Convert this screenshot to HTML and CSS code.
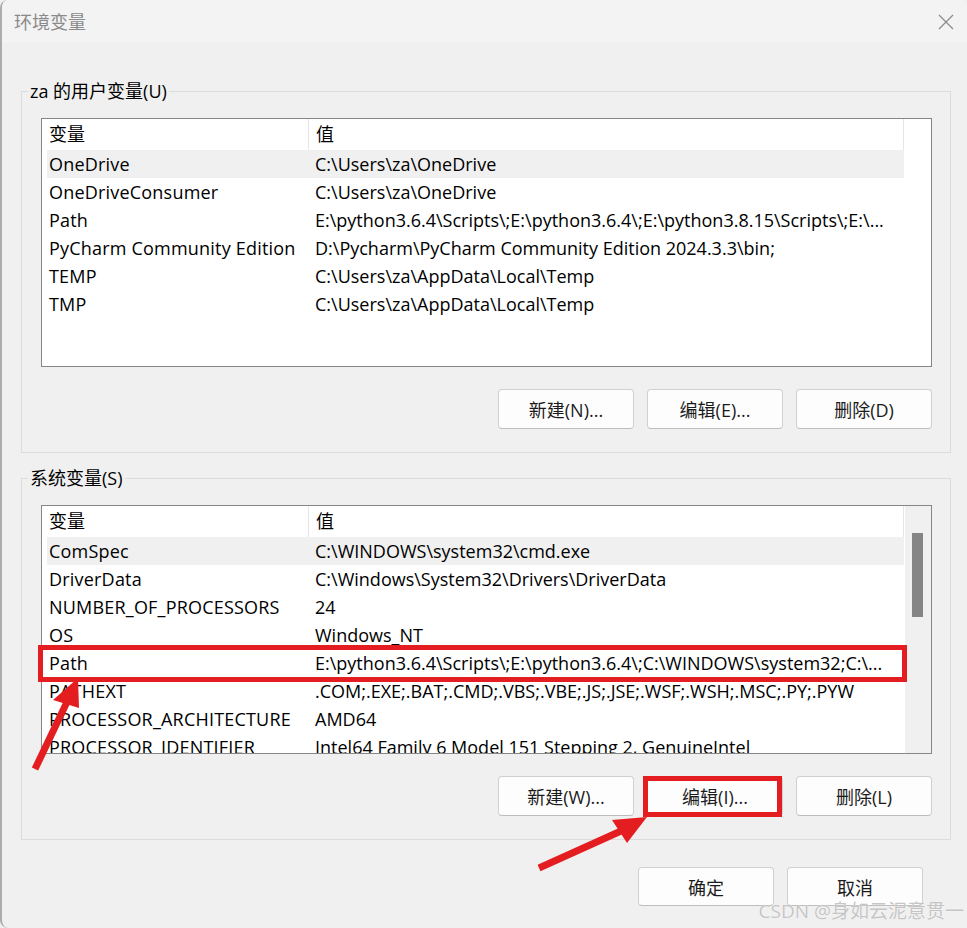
FILE: index.html
```html
<!DOCTYPE html>
<html lang="zh-CN">
<head>
<meta charset="utf-8">
<title>环境变量</title>
<link rel="stylesheet" href="styles.css">
</head>
<body>
<div class="window">
  <header class="titlebar">
    <span class="title">环境变量</span>
    <svg class="close" width="16" height="16" viewBox="0 0 16 16"><path d="M1 1 L15 15 M15 1 L1 15" stroke="#8a8a8a" stroke-width="1.2" fill="none"/></svg>
  </header>
  <main class="content">
    <fieldset class="group">
      <legend>za 的用户变量(U)</legend>
      <div class="group-body">
        <div class="list">
          <div class="cols">
            <div class="head"><div class="hc name">变量</div><div class="hc value">值</div></div>
            <div class="row sel"><div class="c name">OneDrive</div><div class="c value">C:\Users\za\OneDrive</div></div>
            <div class="row"><div class="c name">OneDriveConsumer</div><div class="c value">C:\Users\za\OneDrive</div></div>
            <div class="row"><div class="c name">Path</div><div class="c value">E:\python3.6.4\Scripts\;E:\python3.6.4\;E:\python3.8.15\Scripts\;E:\...</div></div>
            <div class="row"><div class="c name">PyCharm Community Edition</div><div class="c value">D:\Pycharm\PyCharm Community Edition 2024.3.3\bin;</div></div>
            <div class="row"><div class="c name">TEMP</div><div class="c value">C:\Users\za\AppData\Local\Temp</div></div>
            <div class="row"><div class="c name">TMP</div><div class="c value">C:\Users\za\AppData\Local\Temp</div></div>
          </div>
          <div class="side"></div>
        </div>
        <div class="btns">
          <button class="btn">新建(N)...</button>
          <button class="btn">编辑(E)...</button>
          <button class="btn">删除(D)</button>
        </div>
      </div>
    </fieldset>

    <fieldset class="group sys">
      <legend>系统变量(S)</legend>
      <div class="group-body">
        <div class="list">
          <div class="cols">
            <div class="head"><div class="hc name">变量</div><div class="hc value">值</div></div>
            <div class="row sel"><div class="c name">ComSpec</div><div class="c value">C:\WINDOWS\system32\cmd.exe</div></div>
            <div class="row"><div class="c name">DriverData</div><div class="c value">C:\Windows\System32\Drivers\DriverData</div></div>
            <div class="row"><div class="c name">NUMBER_OF_PROCESSORS</div><div class="c value">24</div></div>
            <div class="row"><div class="c name">OS</div><div class="c value">Windows_NT</div></div>
            <div class="row"><div class="c name">Path</div><div class="c value">E:\python3.6.4\Scripts\;E:\python3.6.4\;C:\WINDOWS\system32;C:\...</div></div>
            <div class="row"><div class="c name">PATHEXT</div><div class="c value">.COM;.EXE;.BAT;.CMD;.VBS;.VBE;.JS;.JSE;.WSF;.WSH;.MSC;.PY;.PYW</div></div>
            <div class="row"><div class="c name">PROCESSOR_ARCHITECTURE</div><div class="c value">AMD64</div></div>
            <div class="row"><div class="c name">PROCESSOR_IDENTIFIER</div><div class="c value">Intel64 Family 6 Model 151 Stepping 2, GenuineIntel</div></div>
          </div>
          <div class="side scroll"><div class="thumb"></div></div>
        </div>
        <div class="btns">
          <button class="btn">新建(W)...</button>
          <button class="btn">编辑(I)...</button>
          <button class="btn">删除(L)</button>
        </div>
      </div>
    </fieldset>

    <div class="footer">
      <button class="btn foot">确定</button>
      <button class="btn foot">取消</button>
    </div>
  </main>

  <svg class="annot" width="967" height="928" viewBox="0 0 967 928">
    <rect x="40.5" y="647.5" width="864" height="32" fill="none" stroke="#e41e20" stroke-width="5"/>
    <rect x="645.5" y="778.5" width="134" height="36" fill="none" stroke="#e41e20" stroke-width="5"/>
    <line x1="35" y1="769" x2="67" y2="702" stroke="#e41e20" stroke-width="7"/>
    <polygon points="53,700 79,708 78,678" fill="#e41e20"/>
    <line x1="539" y1="868" x2="621" y2="831" stroke="#e41e20" stroke-width="7"/>
    <polygon points="612,820 627,843 647,817" fill="#e41e20"/>
  </svg>
  <div class="watermark">CSDN @身如云泥意贯一</div>
</div>
</body>
</html>
```
FILE: styles.css
```css
* { box-sizing: border-box; }
html, body { margin: 0; padding: 0; background: #f0f0f0; }
body {
  font-family: "Open Sans", "Noto Sans CJK SC", sans-serif;
  font-size: 18px;
  color: #000;
}
.window {
  position: relative;
  width: 967px;
  height: 928px;
  background: #f0f0f0;
  border-left: 2px solid #acacac;
  border-radius: 8px 8px 0 8px;
  overflow: hidden;
}
.titlebar {
  height: 43px;
  background: #f3f3f3;
  display: flex;
  align-items: center;
  justify-content: space-between;
  padding: 0 13px 0 12px;
}
.title { color: #8a8a8a; font-size: 18px; line-height: 20px; }
.close { display: block; }

.content { padding: 38px 16px 0 19px; }

.group {
  margin: 0;
  padding: 0;
  border: 1px solid #dcdcdc;
  min-width: 0;
}
.group.sys { margin-top: 15px; }
.group legend {
  margin-left: 6px;
  padding: 0 2px;
  height: 20px;
  line-height: 20px;
  font-size: 18px;
}
.group-body { padding: 17px 18px 23px 19px; }

.list {
  height: 249px;
  border: 1px solid #868686;
  background: #fff;
  display: flex;
  overflow: hidden;
}
.cols { width: 862px; flex: none; }
.side { width: 27px; flex: none; }
.side.scroll { background: #f0f0f0; border-left: 1px solid #fff; }
.thumb { width: 11px; height: 84px; margin: 27px 0 0 7px; background: #858585; }

.head { display: flex; height: 31px; }
.hc { line-height: 31px; padding-left: 7px; border-right: 1px solid #e5e5e5; }
.hc.name { width: 267px; }
.hc.value { width: 595px; }

.row {
  display: flex;
  height: 28px;
  margin-left: 5px;
  width: 857px;
  line-height: 28px;
  white-space: nowrap;
}
.row.sel { background: #f0f0f0; }
.c { overflow: hidden; }
.c.name { width: 261px; padding-left: 2px; letter-spacing: 0.2px; }
.c.value { width: 596px; padding-left: 7px; }

.btns {
  display: flex;
  justify-content: flex-end;
  gap: 13px;
  margin-top: 22px;
}
.btn {
  width: 136px;
  height: 40px;
  padding: 0;
  border: 1px solid #d0d0d0;
  border-bottom-color: #bdbdbd;
  border-radius: 4px;
  background: #fdfdfd;
  font-family: inherit;
  font-size: 18px;
  color: #1b1b1b;
  display: flex;
  align-items: center;
  justify-content: center;
}
.footer {
  display: flex;
  justify-content: flex-end;
  gap: 13px;
  margin-top: 27px;
  padding-right: 28px;
}
.btn.foot { height: 39px; }

.annot { position: absolute; left: -2px; top: 0; pointer-events: none; }
.watermark {
  position: absolute;
  right: 3px;
  bottom: 6px;
  font-size: 19px;
  line-height: 21px;
  color: rgba(190, 190, 190, 0.9);
  text-shadow: 0 0 1px rgba(255, 255, 255, 0.9);
  white-space: nowrap;
}
```
